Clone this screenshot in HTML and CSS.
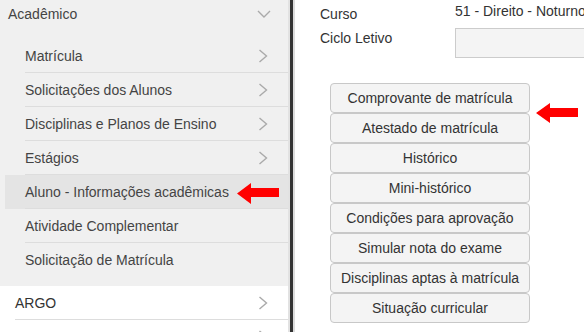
FILE: index.html
```html
<!DOCTYPE html>
<html>
	<head>
		<meta charset="utf-8">
		<title>Acadêmico</title>
		<link rel="stylesheet" href="styles.css">
	</head>
	<body>
		<div class="page">
			<div class="sidebar">
				<div class="group">
					<div class="group_head">
						<span>Acadêmico</span>
						<svg class="chev_down" width="14" height="8" viewBox="0 0 14 8"><polyline points="1,1 7,7 13,1" fill="none" stroke="#aaa" stroke-width="1.4"/></svg>
					</div>
					<ul class="submenu">
						<li><div class="item"><span>Matrícula</span><svg class="chev" width="10" height="14" viewBox="0 0 10 14"><polyline points="1.5,1 8.5,7 1.5,13" fill="none" stroke="#aaa" stroke-width="1.4"/></svg></div></li>
						<li><div class="item"><span>Solicitações dos Alunos</span><svg class="chev" width="10" height="14" viewBox="0 0 10 14"><polyline points="1.5,1 8.5,7 1.5,13" fill="none" stroke="#aaa" stroke-width="1.4"/></svg></div></li>
						<li><div class="item"><span>Disciplinas e Planos de Ensino</span><svg class="chev" width="10" height="14" viewBox="0 0 10 14"><polyline points="1.5,1 8.5,7 1.5,13" fill="none" stroke="#aaa" stroke-width="1.4"/></svg></div></li>
						<li><div class="item"><span>Estágios</span><svg class="chev" width="10" height="14" viewBox="0 0 10 14"><polyline points="1.5,1 8.5,7 1.5,13" fill="none" stroke="#aaa" stroke-width="1.4"/></svg></div></li>
						<li class="active"><div class="item"><span>Aluno - Informações acadêmicas</span></div>
							<svg class="arrow arrow_side" width="43" height="21" viewBox="0 0 43 21"><polygon points="0,10.5 14,0 14,5 42,5 42,14 14,14 14,21" fill="#f00"/></svg>
						</li>
						<li><div class="item"><span>Atividade Complementar</span></div></li>
						<li><div class="item"><span>Solicitação de Matrícula</span></div></li>
					</ul>
				</div>
				<div class="top_item">
					<span>ARGO</span>
					<svg class="chev" width="10" height="14" viewBox="0 0 10 14"><polyline points="1.5,1 8.5,7 1.5,13" fill="none" stroke="#aaa" stroke-width="1.4"/></svg>
				</div>
				<div class="top_item">
					<span></span>
					<svg class="chev" width="10" height="14" viewBox="0 0 10 14"><polyline points="1.5,1 8.5,7 1.5,13" fill="none" stroke="#aaa" stroke-width="1.4"/></svg>
				</div>
			</div>
			<div class="splitter"></div>
			<div class="main">
				<div class="field">
					<div class="label">Curso</div>
					<div class="value">51 - Direito - Noturno</div>
				</div>
				<div class="field field_ciclo">
					<div class="label">Ciclo Letivo</div>
					<div class="input"></div>
				</div>
				<div class="buttons">
					<button class="btn">Comprovante de matrícula</button>
					<button class="btn">Atestado de matrícula</button>
					<button class="btn">Histórico</button>
					<button class="btn">Mini-histórico</button>
					<button class="btn">Condições para aprovação</button>
					<button class="btn">Simular nota do exame</button>
					<button class="btn">Disciplinas aptas à matrícula</button>
					<button class="btn">Situação curricular</button>
					<svg class="arrow arrow_main" width="43" height="20" viewBox="0 0 43 20"><polygon points="0,10 14,0 14,5 42,5 42,14 14,14 14,20" fill="#f00"/></svg>
				</div>
			</div>
		</div>
	</body>
</html>
```

FILE: styles.css
```css
body {
	margin: 0;
	font-family: "Liberation Sans", Arial, sans-serif;
	font-size: 14px;
	color: #333;
	background: #fff;
	overflow: hidden;
}

.page {
	display: flex;
	height: 332px;
	overflow: hidden;
}

.sidebar {
	width: 288px;
	flex-shrink: 0;
	background: #fff;
	overflow: hidden;
}

.group {
	background: #f0f0f0;
	padding-bottom: 10px;
}

.group_head {
	display: flex;
	align-items: center;
	justify-content: space-between;
	height: 27px;
	padding: 0 17px 0 8px;
	color: #444;
}

.submenu {
	list-style: none;
	margin: 12px 0 0 5px;
	padding: 0;
}

.submenu li {
	position: relative;
	padding-left: 20px;
}

.submenu li.active {
	background: #e4e4e4;
}

.item {
	display: flex;
	align-items: center;
	justify-content: space-between;
	height: 33px;
	padding-right: 20px;
	border-bottom: 1px solid #ddd;
	color: #444;
}

.submenu li:last-child .item {
	border-bottom: none;
}

.top_item {
	display: flex;
	align-items: center;
	justify-content: space-between;
	height: 33px;
	margin-left: 15px;
	padding-right: 20px;
	border-bottom: 1px solid #ddd;
	color: #333;
}

.splitter {
	width: 7px;
	flex-shrink: 0;
	background: #333;
	border-left: 2px solid #e2e2e2;
	border-right: 2px solid #dcdcdc;
	box-sizing: border-box;
}

.main {
	flex: 1;
	min-width: 0;
	padding: 0 0 0 25px;
	overflow: hidden;
}

.field {
	display: flex;
	align-items: center;
}

.label {
	width: 135px;
	flex-shrink: 0;
}

.value {
	white-space: nowrap;
}

.field:first-child {
	height: 24px;
}

.field:first-child .label {
	padding-top: 3px;
}

.field:first-child .value {
	padding-bottom: 2px;
}

.field_ciclo {
	margin-top: 4px;
	align-items: flex-start;
}

.field_ciclo .label {
	padding-top: 2px;
}

.input {
	width: 200px;
	height: 28px;
	flex-shrink: 0;
	border: 1px solid #ccc;
	background: #f4f4f4;
}

.buttons {
	position: relative;
	display: flex;
	flex-direction: column;
	width: 200px;
	margin: 25px 0 0 10px;
}

.btn {
	height: 30px;
	margin: 0;
	padding: 0;
	font-family: inherit;
	font-size: 14px;
	color: #333;
	background: #f4f4f4;
	border: 1px solid #c8c8c8;
	border-radius: 4px;
}

.arrow {
	position: absolute;
}

.arrow_side {
	left: 232px;
	top: 8px;
}

.arrow_main {
	left: 206px;
	top: 20px;
}
```
